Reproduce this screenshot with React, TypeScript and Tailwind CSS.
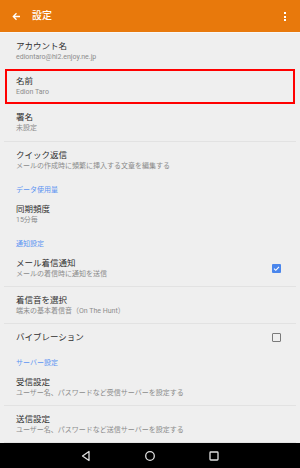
import React from 'react';

const font = { fontFamily: 'Roboto, "Noto Sans CJK JP", sans-serif' };

function Item({ title, sub, h = 'h-[36px]', right }: { title: string; sub?: string; h?: string; right?: React.ReactNode }) {
  return (
    <div className={`${h} flex items-center justify-between pl-[16px] pr-[19px]`}>
      <div className="flex flex-col">
        <span className="text-[8.5px] leading-[11px] text-[#2e2e2e]">{title}</span>
        {sub && <span className="text-[7px] leading-[10px] text-[#8c8c8c]">{sub}</span>}
      </div>
      {right}
    </div>
  );
}

function Section({ label, h = 'h-[19px]' }: { label: string; h?: string }) {
  return (
    <div className={`${h} pl-[16px] pt-[8px] text-[7px] leading-[8px] text-[#5d95f2]`}>{label}</div>
  );
}

function Divider() {
  return <div className="mx-[4px] h-px bg-[#e2e2e2]" />;
}

function Checked() {
  return (
    <div className="w-[9px] h-[9px] rounded-[1px] bg-[#4a86ec] flex items-center justify-center">
      <svg width="7" height="7" viewBox="0 0 7 7">
        <path d="M1 3.6 L2.8 5.3 L6 1.8" stroke="white" strokeWidth="1.1" fill="none" />
      </svg>
    </div>
  );
}

function Unchecked() {
  return <div className="w-[9px] h-[9px] rounded-[1px] border-[1.5px] border-[#7a7a7a]" />;
}

export default function App() {
  return (
    <div className="w-[300px] h-[468px] bg-[#efefef] flex flex-col overflow-hidden" style={font}>
      <div className="h-[32px] bg-[#e8790c] flex items-center justify-between pl-[12px] pr-[14px]">
        <div className="flex items-center gap-[11px]">
          <svg width="9" height="9" viewBox="0 0 9 9">
            <path d="M8 4.5 H1.5 M4.5 1.3 L1.3 4.5 L4.5 7.7" stroke="white" strokeWidth="1.3" fill="none" />
          </svg>
          <span className="text-[10px] leading-[12px] text-white font-medium">設定</span>
        </div>
        <div className="flex flex-col gap-[1.5px] mt-[1px]">
          <span className="w-[2px] h-[2px] bg-white" />
          <span className="w-[2px] h-[2px] bg-white" />
          <span className="w-[2px] h-[2px] bg-white" />
        </div>
      </div>
      <div className="h-px bg-[#f7f7f7]" />

      <Item title="アカウント名" sub="ediontaro@hi2.enjoy.ne.jp" />
      <div className="mx-[5px] h-[35px] border-2 border-[#ff0000] flex items-center pl-[9px]">
        <div className="flex flex-col">
          <span className="text-[8.5px] leading-[11px] text-[#2e2e2e]">名前</span>
          <span className="text-[7px] leading-[10px] text-[#8c8c8c]">Edion Taro</span>
        </div>
      </div>
      <Item title="署名" sub="未設定" h="h-[37px]" />
      <Divider />
      <Item title="クイック返信" sub="メールの作成時に頻繁に挿入する文章を編集する" />

      <Section label="データ使用量" />
      <Item title="同期頻度" sub="15分毎" h="h-[35px]" />

      <Section label="通知設定" />
      <Item title="メール着信通知" sub="メールの着信時に通知を送信" h="h-[35px]" right={<Checked />} />
      <Divider />
      <Item title="着信音を選択" sub="端末の基本着信音（On The Hunt）" />
      <Divider />
      <Item title="バイブレーション" h="h-[27px]" right={<Unchecked />} />

      <Section label="サーバー設定" />
      <Item title="受信設定" sub="ユーザー名、パスワードなど受信サーバーを設定する" h="h-[35px]" />
      <Divider />
      <Item title="送信設定" sub="ユーザー名、パスワードなど送信サーバーを設定する" />
      <Divider />

      <div className="mt-auto h-[25px] bg-black flex items-center justify-center gap-[50px]">
        <svg width="14" height="14" viewBox="0 0 14 14">
          <path d="M10 2.5 L3.5 7 L10 11.5 Z" stroke="#e0e0e0" strokeWidth="1.3" fill="none" strokeLinejoin="round" />
        </svg>
        <svg width="14" height="14" viewBox="0 0 14 14">
          <circle cx="7" cy="7" r="4.3" stroke="#e0e0e0" strokeWidth="1.3" fill="none" />
        </svg>
        <svg width="14" height="14" viewBox="0 0 14 14">
          <rect x="3" y="3" width="8" height="8" rx="0.8" stroke="#e0e0e0" strokeWidth="1.3" fill="none" />
        </svg>
      </div>
    </div>
  );
}
